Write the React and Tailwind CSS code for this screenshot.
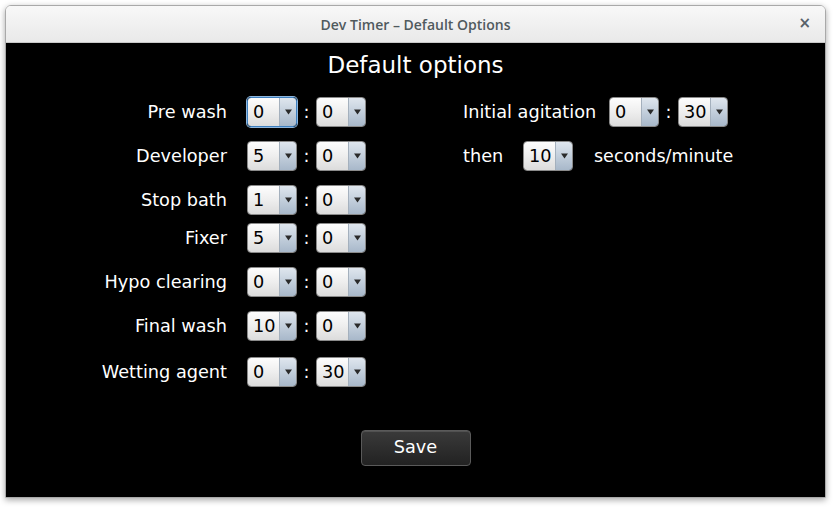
import React from "react";

function Combo({ value, w = 50, focused = false }) {
  return (
    <div
      className={
        "flex h-[30px] rounded-[4px] border overflow-hidden " +
        (focused
          ? "border-[#3d7fbf] shadow-[0_0_0_1px_#8fb6dc]"
          : "border-[#8a8a8a]")
      }
      style={{ width: w }}
    >
      <div className="flex-1 flex items-center pl-[5px] pt-[2px] bg-gradient-to-b from-[#fdfdfd] via-[#eeeeee] to-[#dcdcdc] text-black text-[17.7px] leading-none">
        {value}
      </div>
      <div className="w-[17px] flex items-center justify-center border-l border-[#a4b0bd] bg-gradient-to-b from-[#dfe6ee] via-[#c3cfdc] to-[#a8b8ca]">
        <svg width="7" height="6" viewBox="0 0 7 6">
          <path d="M0 0.5 L7 0.5 L3.5 5.5 Z" fill="#2a2a2a" />
        </svg>
      </div>
    </div>
  );
}

function Colon() {
  return (
    <div className="w-[19px] pt-[2px] text-center text-white text-[17.7px] leading-none">:</div>
  );
}

function Row({ label, a, b, focused, mt }) {
  return (
    <div className={"flex items-center h-[30px] " + mt}>
      <div className="w-[221px] pt-[2px] text-right text-white text-[17.7px] leading-none">
        {label}
      </div>
      <div className="w-[20px]" />
      <Combo value={a} focused={focused} />
      <Colon />
      <Combo value={b} />
    </div>
  );
}

export default function App() {
  return (
    <div
      className="w-[834px] h-[507px] bg-white overflow-hidden"
      style={{ fontFamily: '"DejaVu Sans", sans-serif' }}
    >
      <div className="ml-[5px] mt-[5px] w-[821px] h-[493px] flex flex-col rounded-t-[6px] border border-[#a9a9a9] shadow-[0_2px_6px_rgba(0,0,0,0.35)] overflow-hidden">
        <div className="h-[37px] shrink-0 flex items-center relative bg-gradient-to-b from-[#f8f8f8] to-[#e9e9e9] border-b border-[#c8c8c8]">
          <div
            className="flex-1 text-center text-[14px] font-semibold text-[#505a5e]"
            style={{ fontFamily: '"Open Sans", sans-serif' }}
          >
            Dev Timer – Default Options
          </div>
          <div className="absolute right-[14px] top-[10px] text-[#57616a] font-bold text-[15px] leading-none">
            ×
          </div>
        </div>
        <div className="flex-1 bg-black flex flex-col">
          <div className="pt-[7px] h-[30px] text-center text-white text-[23px] leading-[30px] box-content">
            Default options
          </div>
          <div className="flex mt-[17px]">
            <div className="flex flex-col w-[360px]">
              <Row label="Pre wash" a="0" b="0" focused mt="" />
              <Row label="Developer" a="5" b="0" mt="mt-[14px]" />
              <Row label="Stop bath" a="1" b="0" mt="mt-[14px]" />
              <Row label="Fixer" a="5" b="0" mt="mt-[8px]" />
              <Row label="Hypo clearing" a="0" b="0" mt="mt-[14px]" />
              <Row label="Final wash" a="10" b="0" mt="mt-[14px]" />
              <Row label="Wetting agent" a="0" b="30" mt="mt-[16px]" />
            </div>
            <div className="flex flex-col ml-[97px]">
              <div className="flex items-center h-[30px]">
                <div className="w-[146px] pt-[2px] text-white text-[17.7px] leading-none">
                  Initial agitation
                </div>
                <Combo value="0" />
                <Colon />
                <Combo value="30" />
              </div>
              <div className="flex items-center h-[30px] mt-[14px]">
                <div className="w-[60px] pt-[2px] text-white text-[17.7px] leading-none">then</div>
                <Combo value="10" />
                <div className="ml-[21px] pt-[2px] text-white text-[17.5px] leading-none">
                  seconds/minute
                </div>
              </div>
            </div>
          </div>
          <div className="flex justify-center mt-[43px]">
            <button className="w-[110px] h-[36px] rounded-[4px] border border-[#5a5a5a] bg-gradient-to-b from-[#3a3a3a] to-[#222222] text-white text-[17.7px] leading-none shadow-[inset_0_1px_0_rgba(255,255,255,0.12)]">
              Save
            </button>
          </div>
        </div>
      </div>
    </div>
  );
}
